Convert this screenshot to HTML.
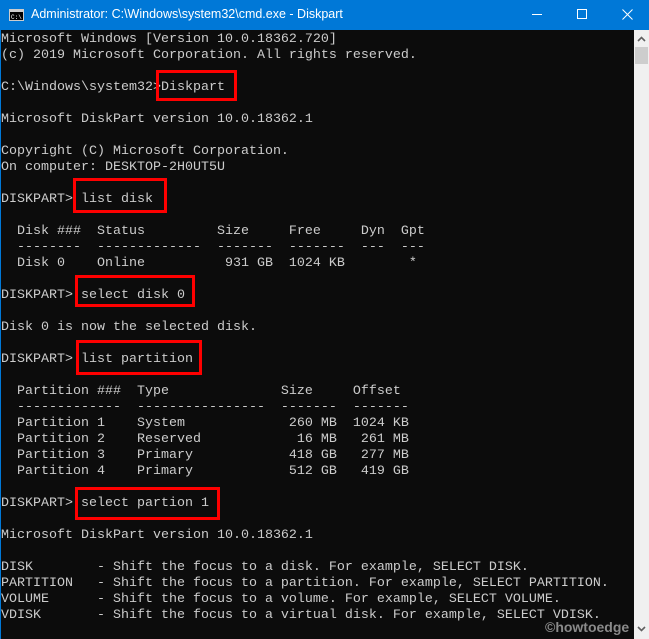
<!DOCTYPE html>
<html><head><style>
html,body{margin:0;padding:0;}
body{width:649px;height:639px;overflow:hidden;background:#0c0c0c;position:relative;font-family:"Liberation Sans",sans-serif;}
#tb{position:absolute;left:0;top:0;width:649px;height:30px;background:#0078d7;color:#fff;}
#tb .t{position:absolute;left:31px;top:7px;font-size:12.5px;}
#con{position:absolute;left:1px;top:32px;margin:0;font-family:"Liberation Mono",monospace;font-size:13.33px;line-height:16px;color:#cccccc;white-space:pre;}
#sb{position:absolute;left:634px;top:30px;width:15px;height:609px;background:#f0f0f0;}
.box{position:absolute;border:3px solid #f00;box-sizing:border-box;}
#lb{position:absolute;left:0;top:30px;width:1px;height:609px;background:#0078d7;}
</style></head><body>
<div id="tb">
<svg style="position:absolute;left:9px;top:9px" width="15" height="12"><rect x="0.5" y="0.5" width="14" height="11" fill="#000" stroke="#ccc"/><rect x="1" y="1" width="13" height="2" fill="#ccc"/><text x="2" y="10" font-size="6" fill="#fff" font-family="Liberation Mono">C:\</text></svg>
<span class="t">Administrator: C:\Windows\system32\cmd.exe - Diskpart</span>
<div style="position:absolute;left:532px;top:14px;width:10px;height:1px;background:#fff"></div>
<div style="position:absolute;left:577px;top:9px;width:8px;height:8px;border:1px solid #fff"></div>
<svg style="position:absolute;left:622px;top:9px" width="11" height="11"><path d="M0.5 0.5L10.5 10.5M10.5 0.5L0.5 10.5" stroke="#fff" stroke-width="1"/></svg>
</div>
<div id="lb"></div>
<pre id="con">Microsoft Windows [Version 10.0.18362.720]
(c) 2019 Microsoft Corporation. All rights reserved.

C:\Windows\system32>Diskpart

Microsoft DiskPart version 10.0.18362.1

Copyright (C) Microsoft Corporation.
On computer: DESKTOP-2H0UT5U

DISKPART> list disk

  Disk ###  Status         Size     Free     Dyn  Gpt
  --------  -------------  -------  -------  ---  ---
  Disk 0    Online          931 GB  1024 KB        *

DISKPART> select disk 0

Disk 0 is now the selected disk.

DISKPART> list partition

  Partition ###  Type              Size     Offset
  -------------  ----------------  -------  -------
  Partition 1    System             260 MB  1024 KB
  Partition 2    Reserved            16 MB   261 MB
  Partition 3    Primary            418 GB   277 MB
  Partition 4    Primary            512 GB   419 GB

DISKPART> select partion 1

Microsoft DiskPart version 10.0.18362.1

DISK        - Shift the focus to a disk. For example, SELECT DISK.
PARTITION   - Shift the focus to a partition. For example, SELECT PARTITION.
VOLUME      - Shift the focus to a volume. For example, SELECT VOLUME.
VDISK       - Shift the focus to a virtual disk. For example, SELECT VDISK.</pre>
<div class="box" style="left:156px;top:70px;width:81px;height:31px"></div>
<div class="box" style="left:73px;top:178px;width:94px;height:35px"></div>
<div class="box" style="left:75px;top:275px;width:120px;height:32px"></div>
<div class="box" style="left:76px;top:340px;width:126px;height:35px"></div>
<div class="box" style="left:75px;top:487px;width:145px;height:33px"></div>
<div id="sb">
<svg style="position:absolute;left:3px;top:6px" width="9" height="6"><path d="M1 5L4.5 1.5L8 5" stroke="#606060" stroke-width="1.6" fill="none"/></svg>
<div style="position:absolute;left:1px;top:17px;width:13px;height:17px;background:#cdcdcd"></div>
<svg style="position:absolute;left:3px;top:596px" width="9" height="6"><path d="M1 1L4.5 4.5L8 1" stroke="#606060" stroke-width="1.6" fill="none"/></svg>
</div>
<div style="position:absolute;left:545px;top:619px;font-family:'Liberation Sans',sans-serif;font-weight:bold;font-size:14px;color:#8a8a8a;">©howtoedge</div>
</body></html>
